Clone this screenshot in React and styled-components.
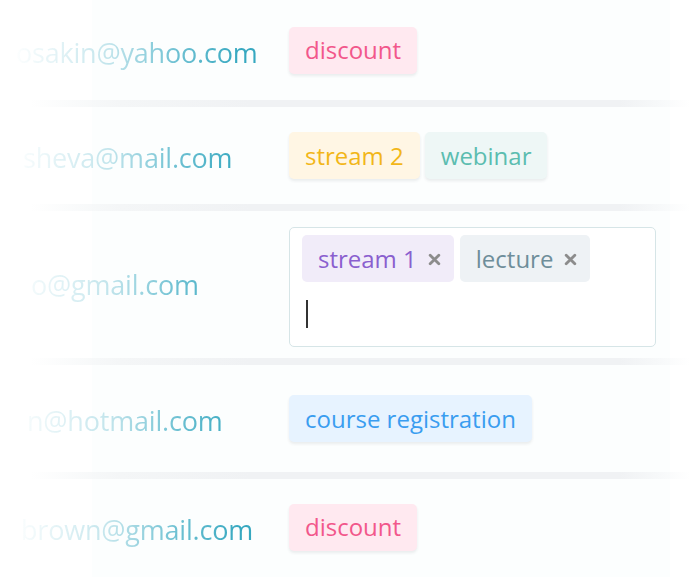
import React from "react";
import styled, { createGlobalStyle } from "styled-components";

const GlobalStyle = createGlobalStyle`
  html, body {
    margin: 0;
    padding: 0;
    background: #ffffff;
  }
  body {
    font-family: "Open Sans", "Noto Sans", sans-serif;
    overflow: hidden;
  }
`;

const TAG_COLORS = {
  pink: { bg: "#ffe9f0", fg: "#f2578b" },
  yellow: { bg: "#fff6e4", fg: "#f2b619" },
  teal: { bg: "#eef7f6", fg: "#5bbdb0" },
  blue: { bg: "#e7f3ff", fg: "#3a9df0" },
  purple: { bg: "#f1ecf9", fg: "#8a5fcf" },
  gray: { bg: "#eef2f5", fg: "#6e8e9a" },
};

const Page = styled.div`
  width: 691px;
  height: 577px;
  overflow: hidden;
  background: linear-gradient(
    90deg,
    #ffffff 0px,
    #ffffff 92px,
    #fcfefe 92px,
    #fcfefe 670px,
    #ffffff 670px
  );
`;

const List = styled.div`
  display: flex;
  flex-direction: column;
`;

const Row = styled.div`
  display: flex;
  align-items: center;
  height: ${(props) => props.height}px;
`;

const Separator = styled.div`
  height: 7px;
  background: linear-gradient(
    90deg,
    rgba(240, 243, 244, 0) 30px,
    #f4f6f7 120px,
    #f0f2f4 250px,
    #f0f2f4 620px,
    rgba(240, 243, 244, 0) 690px
  );
`;

const Email = styled.div`
  width: 289px;
  flex-shrink: 0;
  box-sizing: border-box;
  padding-left: ${(props) => props.indent}px;
  padding-top: ${(props) => props.offset ?? 4}px;
  font-size: 27px;
  letter-spacing: -0.2px;
  white-space: nowrap;
  overflow: hidden;
  color: transparent;
  background: linear-gradient(
    90deg,
    rgba(58, 170, 194, 0) 12px,
    rgba(58, 170, 194, 0.06) 30px,
    rgba(58, 170, 194, 0.3) 110px,
    rgba(58, 170, 194, 0.75) 180px,
    #36a8c0 240px
  );
  -webkit-background-clip: text;
  background-clip: text;
`;

const Tags = styled.div`
  display: flex;
  gap: 5px;
`;

const Tag = styled.span`
  display: inline-flex;
  align-items: center;
  height: 47px;
  padding: 0 16px;
  border-radius: 5px;
  font-size: 24px;
  line-height: 1;
  background: ${(props) => TAG_COLORS[props.color].bg};
  color: ${(props) => TAG_COLORS[props.color].fg};
  box-shadow: 0 2px 3px rgba(40, 60, 70, 0.09);
`;

const InputBox = styled.div`
  box-sizing: border-box;
  width: 367px;
  height: 120px;
  margin-top: 5px;
  padding: 7px 12px;
  background: #ffffff;
  border: 1px solid #d6e5e7;
  border-radius: 5px;
  display: flex;
  flex-direction: column;
  gap: 18px;
`;

const Chips = styled.div`
  display: flex;
  gap: 6px;
`;

const Chip = styled.span`
  display: inline-flex;
  align-items: center;
  gap: 11px;
  height: 47px;
  padding: 0 13px 0 16px;
  border-radius: 5px;
  font-size: 24px;
  line-height: 1;
  background: ${(props) => TAG_COLORS[props.color].bg};
  color: ${(props) => TAG_COLORS[props.color].fg};
`;

const Remove = styled.svg`
  width: 13px;
  height: 13px;
  margin-top: 2px;
`;

const Caret = styled.div`
  width: 2px;
  height: 28px;
  margin-left: 4px;
  background: #333333;
`;

const RemoveIcon = () => (
  <Remove viewBox="0 0 12 12">
    <path d="M2 2 L10 10 M10 2 L2 10" stroke="#8c8c8c" strokeWidth="2.6" strokeLinecap="round" />
  </Remove>
);

export default function App() {
  return (
    <Page>
      <GlobalStyle />
      <List>
        <Row height={100}>
          <Email indent={16}>osakin@yahoo.com</Email>
          <Tags>
            <Tag color="pink">discount</Tag>
          </Tags>
        </Row>
        <Separator />
        <Row height={97}>
          <Email indent={23}>sheva@mail.com</Email>
          <Tags>
            <Tag color="yellow">stream 2</Tag>
            <Tag color="teal">webinar</Tag>
          </Tags>
        </Row>
        <Separator />
        <Row height={147}>
          <Email indent={31} offset={0}>o@gmail.com</Email>
          <InputBox>
            <Chips>
              <Chip color="purple">
                stream 1 <RemoveIcon />
              </Chip>
              <Chip color="gray">
                lecture <RemoveIcon />
              </Chip>
            </Chips>
            <Caret />
          </InputBox>
        </Row>
        <Separator />
        <Row height={107}>
          <Email indent={27}>n@hotmail.com</Email>
          <Tags>
            <Tag color="blue">course registration</Tag>
          </Tags>
        </Row>
        <Separator />
        <Row height={96}>
          <Email indent={21}>brown@gmail.com</Email>
          <Tags>
            <Tag color="pink">discount</Tag>
          </Tags>
        </Row>
      </List>
    </Page>
  );
}
